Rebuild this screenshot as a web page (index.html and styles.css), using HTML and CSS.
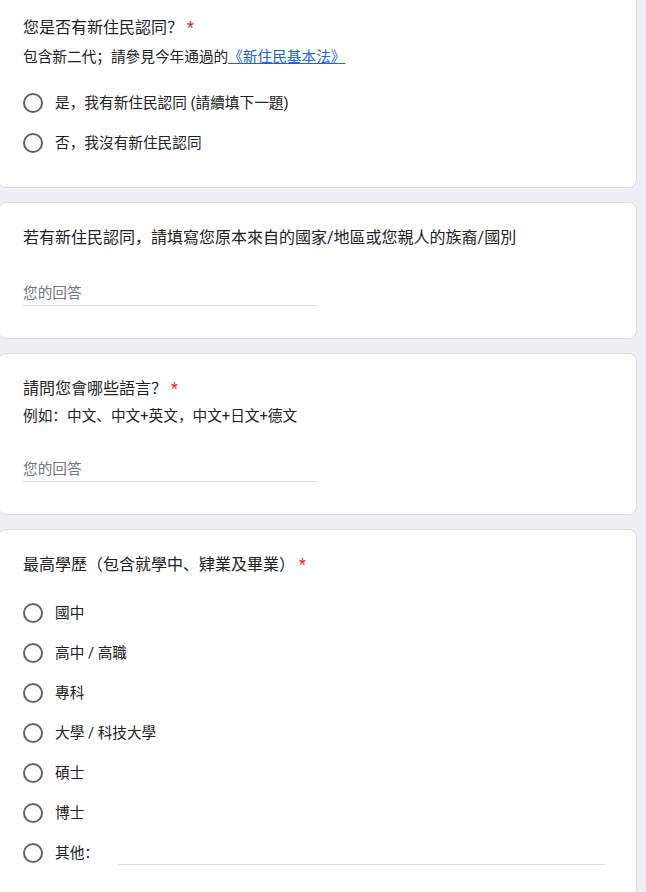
FILE: index.html
```html
<!DOCTYPE html>
<html lang="zh-Hant">
<head>
<meta charset="utf-8">
<title>表單</title>
<link rel="stylesheet" href="styles.css">
</head>
<body>
<main class="form">
  <section class="card card-first">
    <div class="title">您是否有新住民認同？ <span class="req">*</span></div>
    <div class="desc">包含新二代；請參見今年通過的<a class="link" href="#">《新住民基本法》</a></div>
    <div class="options">
      <div class="option"><span class="radio"></span><span class="label">是，我有新住民認同 (請續填下一題)</span></div>
      <div class="option"><span class="radio"></span><span class="label">否，我沒有新住民認同</span></div>
    </div>
  </section>

  <section class="card card-answer">
    <div class="title">若有新住民認同，請填寫您原本來自的國家/地區或您親人的族裔/國別</div>
    <div class="answer">您的回答</div>
  </section>

  <section class="card card-answer">
    <div class="title">請問您會哪些語言？ <span class="req">*</span></div>
    <div class="desc">例如：中文、中文+英文，中文+日文+德文</div>
    <div class="answer">您的回答</div>
  </section>

  <section class="card card-last">
    <div class="title">最高學歷（包含就學中、肄業及畢業） <span class="req">*</span></div>
    <div class="options">
      <div class="option"><span class="radio"></span><span class="label">國中</span></div>
      <div class="option"><span class="radio"></span><span class="label">高中 / 高職</span></div>
      <div class="option"><span class="radio"></span><span class="label">專科</span></div>
      <div class="option"><span class="radio"></span><span class="label">大學 / 科技大學</span></div>
      <div class="option"><span class="radio"></span><span class="label">碩士</span></div>
      <div class="option"><span class="radio"></span><span class="label">博士</span></div>
      <div class="option"><span class="radio"></span><span class="label">其他：</span><span class="other-line"></span></div>
    </div>
  </section>
</main>
</body>
</html>
```

FILE: styles.css
```css
html, body {
  margin: 0;
  padding: 0;
  background: #efedf6;
  overflow: hidden;
}

body {
  font-family: Roboto, "Noto Sans CJK SC", "Noto Sans CJK TC", sans-serif;
  font-feature-settings: "locl" 0;
  color: #202124;
}

.form {
  display: flex;
  flex-direction: column;
  gap: 14px;
  width: 639px;
  margin-left: -2px;
  margin-top: -7px;
}

.card {
  box-sizing: border-box;
  background: #ffffff;
  border: 1px solid #dadce0;
  border-radius: 8px;
  padding: 22px 24px 24px 24px;
}

.card-answer {
  padding-top: 23px;
  padding-bottom: 32px;
}

.card-last {
  padding-top: 23px;
  padding-bottom: 40px;
}

.title {
  font-size: 16px;
  line-height: 24px;
  color: #202124;
  white-space: nowrap;
}

.req {
  color: #d93025;
}

.desc {
  margin-top: 5px;
  font-size: 14.67px;
  line-height: 20px;
  color: #202124;
}

.card-first .desc {
  margin-top: 7px;
}

.link {
  color: #1a65d6;
  text-decoration: underline;
}

.options {
  margin-top: 16px;
  display: flex;
  flex-direction: column;
}

.option {
  display: flex;
  align-items: center;
  height: 40px;
}

.radio {
  box-sizing: border-box;
  width: 20px;
  height: 20px;
  border: 2px solid #5f6368;
  border-radius: 50%;
  margin-right: 12px;
  flex: 0 0 auto;
}

.label {
  font-size: 14.67px;
  line-height: 20px;
  color: #202124;
  white-space: nowrap;
}

.other-line {
  align-self: flex-end;
  flex: 1 1 auto;
  height: 1px;
  background: #dadce0;
  margin: 0 7px 8px 19px;
}

.answer {
  margin-top: 33px;
  width: 295px;
  font-size: 14.67px;
  line-height: 20px;
  color: #70757a;
  padding-bottom: 2px;
  border-bottom: 1px solid #dadce0;
}
```
